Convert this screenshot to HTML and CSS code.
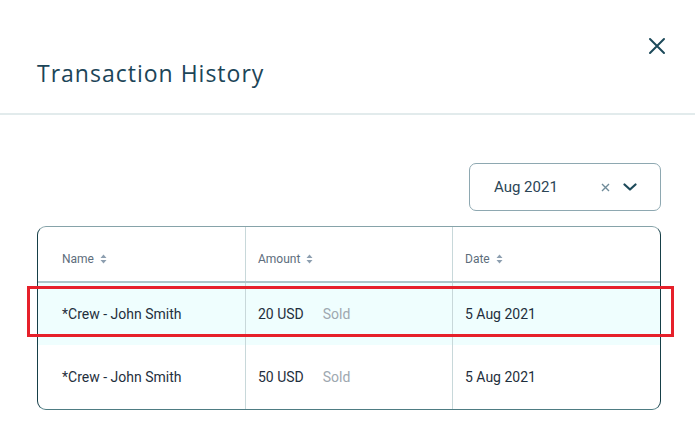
FILE: index.html
```html
<!DOCTYPE html>
<html>
<head>
<meta charset="utf-8">
<link rel="stylesheet" href="styles.css">
</head>
<body>
<div class="modal">
  <div class="modal-header">
    <h1 class="title">Transaction History</h1>
    <button class="close" aria-label="Close">
      <svg width="18" height="18" viewBox="0 0 18 18"><path d="M2 2 L16 16 M16 2 L2 16" stroke="#1d4a5a" stroke-width="2" stroke-linecap="round" fill="none"/></svg>
    </button>
  </div>
  <div class="modal-body">
    <div class="filter-row">
      <div class="select">
        <span class="select-value">Aug 2021</span>
        <span class="select-icons">
          <svg class="clear" width="9" height="9" viewBox="0 0 9 9"><path d="M1 1 L8 8 M8 1 L1 8" stroke="#6f8b99" stroke-width="1.4" fill="none"/></svg>
          <svg class="chev" width="14" height="8" viewBox="0 0 14 8"><path d="M1.5 1.5 L7 6.5 L12.5 1.5" stroke="#1d4a5a" stroke-width="2.2" fill="none" stroke-linecap="round" stroke-linejoin="round"/></svg>
        </span>
      </div>
    </div>
    <div class="table-wrap">
      <div class="table">
        <div class="row head">
          <div class="cell">Name <svg class="sort" width="7" height="10" viewBox="0 0 7 10"><path d="M3.5 0.5 L6.5 4 H0.5 Z M3.5 9.5 L6.5 6 H0.5 Z" fill="#8d9fb0"/></svg></div>
          <div class="cell">Amount <svg class="sort" width="7" height="10" viewBox="0 0 7 10"><path d="M3.5 0.5 L6.5 4 H0.5 Z M3.5 9.5 L6.5 6 H0.5 Z" fill="#8d9fb0"/></svg></div>
          <div class="cell">Date <svg class="sort" width="7" height="10" viewBox="0 0 7 10"><path d="M3.5 0.5 L6.5 4 H0.5 Z M3.5 9.5 L6.5 6 H0.5 Z" fill="#8d9fb0"/></svg></div>
        </div>
        <div class="row body selected">
          <div class="cell">*Crew - John Smith</div>
          <div class="cell"><span class="amt">20 USD</span><span class="status">Sold</span></div>
          <div class="cell">5 Aug 2021</div>
        </div>
        <div class="row body last">
          <div class="cell">*Crew - John Smith</div>
          <div class="cell"><span class="amt">50 USD</span><span class="status">Sold</span></div>
          <div class="cell">5 Aug 2021</div>
        </div>
      </div>
      <div class="highlight"></div>
    </div>
  </div>
</div>
</body>
</html>
```
FILE: styles.css
```css
* { box-sizing: border-box; }
html, body { margin: 0; padding: 0; background: #ffffff; }
body { font-family: Roboto, "Liberation Sans", sans-serif; color: #22323f; }

.modal { width: 695px; height: 437px; overflow: hidden; }

.modal-header {
  height: 115px;
  border-bottom: 2px solid #e2ebec;
  display: flex;
  justify-content: space-between;
  align-items: flex-start;
  padding: 0 29px 0 37px;
}
.title {
  margin: 58px 0 0 0;
  font-family: "Open Sans", sans-serif;
  font-weight: 400;
  font-size: 23px;
  line-height: 30px;
  color: #1c4558;
  letter-spacing: 1px;
}
.close {
  margin-top: 37px;
  padding: 0;
  border: 0;
  background: none;
  width: 18px;
  height: 18px;
  display: block;
}
.close svg { display: block; }

.modal-body { padding: 48px 34px 0 37px; }

.filter-row { display: flex; justify-content: flex-end; }
.select {
  width: 192px;
  height: 48px;
  border: 1px solid #8ea8b1;
  border-radius: 7px;
  display: flex;
  align-items: center;
  justify-content: space-between;
  padding: 0 23px 0 24px;
}
.select-value { font-size: 15px; color: #2b4556; }
.select-icons { display: flex; align-items: center; gap: 13px; }
.select-icons svg { display: block; }

.table-wrap { position: relative; margin-top: 15px; }
.table {
  border-style: solid;
  border-width: 1px;
  border-color: #86a3a9 #163f48 #4e7c83 #163f48;
  border-radius: 9px;
  overflow: hidden;
}
.row {
  display: grid;
  grid-template-columns: 207px 207px 1fr;
}
.row .cell {
  display: flex;
  align-items: center;
  padding-left: 24px;
  border-left: 1px solid #c8d8da;
}
.row .cell:first-child { border-left: 0; }
.head { height: 56px; border-bottom: 2px solid #adc4c8; }
.head .cell { font-size: 12px; color: #5d6d7c; gap: 6px; padding-top: 9px; }
.head .cell:nth-child(2), .head .cell:nth-child(3) { padding-left: 12px; }
.body .cell { font-size: 14px; color: #1f2f3d; }
.body .cell:nth-child(2), .body .cell:nth-child(3) { padding-left: 12px; }
.selected { height: 62px; background: #effefe; }
.last { height: 64px; }
.sort { display: block; }
.amt { margin-right: 19px; }
.status { color: #9ea8b0; }

.highlight {
  position: absolute;
  left: -10px;
  top: 60px;
  width: 647px;
  height: 51px;
  border: 3px solid #e6202a;
  pointer-events: none;
}
```
